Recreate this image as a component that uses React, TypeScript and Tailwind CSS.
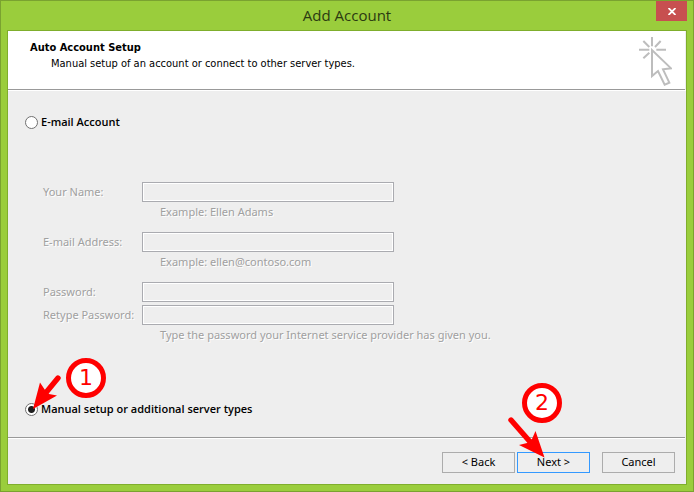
import { useState } from "react"

const fieldClass =
  "h-5 w-full min-w-0 border border-[#aaabb0] bg-[#eeeeee] px-1 shadow-[inset_0_0_0_1px_#ffffff] outline-none"
const labelClass = "leading-5 whitespace-nowrap"
const hintClass = "col-start-2 pl-[18px] leading-5"
const radioLabelClass = "font-['Open_Sans',sans-serif] font-semibold"

function ClickIcon() {
  return (
    <svg width="34" height="50" viewBox="114 106 102 150" fill="none" stroke="#bdbdbd" strokeWidth="6" aria-hidden="true">
      <path d="M156 109V137M117 147H148M169 147H198M130 121L148 139M182 121L165 139M130 173L148 156" />
      <path d="M156 148V226L174 211L194 252L208 246L189 206L213 203Z" />
    </svg>
  )
}

// Numbered circle used for the step callouts
function StepBadge({ step, className }: { step: number; className: string }) {
  return (
    <span
      className={`pointer-events-none absolute flex size-10 items-center justify-center rounded-full border-5 border-[#ff0000] bg-white font-['DejaVu_Sans',sans-serif] text-[22px] leading-none font-normal text-[#ff0000] ${className}`}
    >
      {step}
    </span>
  )
}

function Radio({ id, checked, onChange }: { id: string; checked: boolean; onChange: () => void }) {
  return (
    <input
      type="radio"
      name="setup"
      id={id}
      checked={checked}
      onChange={onChange}
      className="size-[13px] shrink-0 appearance-none rounded-full border border-[#707070] bg-white checked:bg-[radial-gradient(circle,#1f1f1f_3px,#ffffff_4px)]"
    />
  )
}

export default function App() {
  const [mode, setMode] = useState("manual")
  const disabled = mode === "manual"

  return (
    <div className="flex min-h-screen flex-col border border-[#7aa230] bg-[#9acd3c] font-['Noto_Sans','Open_Sans',sans-serif] text-[11px] text-black">
      <header className="relative flex h-[29px] items-center justify-center">
        <h1 className="font-['Open_Sans',sans-serif] text-[15px] text-[#2b3a11]">Add Account</h1>
        <button
          type="button"
          aria-label="Close"
          className="absolute top-0 right-1.5 flex h-5 w-[31px] items-center justify-center bg-[#c75050]"
        >
          <svg width="8" height="7" viewBox="0 0 8 7" stroke="#ffffff" strokeWidth="1.8" aria-hidden="true">
            <path d="M0.5 0L7.5 7M7.5 0L0.5 7" />
          </svg>
        </button>
      </header>

      <main className="mx-1.5 mb-1.5 flex grow flex-col border border-[#7fae2c] bg-[#eeeeee]">
        <section className="mr-px flex h-[59px] justify-between border-b border-[#999999] bg-white pt-[9px] pr-[13px] pl-[22px] font-['DejaVu_Sans_Condensed','DejaVu_Sans',sans-serif]">
          <div>
            <h2 className="leading-4 font-bold">Auto Account Setup</h2>
            <p className="pl-[21px] leading-[15px]">Manual setup of an account or connect to other server types.</p>
          </div>
          <div className="-mt-1">
            <ClickIcon />
          </div>
        </section>

        <form className="flex grow flex-col border-t border-white pl-[17px]" onSubmit={(e) => e.preventDefault()}>
          <div className="mt-[21px] flex h-5 items-center gap-[3px]">
            <Radio id="email-account" checked={mode === "email"} onChange={() => setMode("email")} />
            <label htmlFor="email-account" className={radioLabelClass}>E-mail Account</label>
          </div>

          <fieldset
            disabled={disabled}
            className="mt-[50px] grid grid-cols-[99px_252px_1fr] pl-[18px] text-[#a0a0a0] [text-shadow:1px_1px_0_#ffffff]"
          >
            <label htmlFor="name" className={labelClass}>Your Name:</label>
            <input id="name" type="text" className={fieldClass} />
            <p className={`${hintClass} col-span-2 mb-2.5`}>Example: Ellen Adams</p>

            <label htmlFor="email" className={labelClass}>E-mail Address:</label>
            <input id="email" type="email" className={fieldClass} />
            <p className={`${hintClass} col-span-2 mb-2.5`}>Example: ellen@contoso.com</p>

            <label htmlFor="password" className={labelClass}>Password:</label>
            <input id="password" type="password" className={fieldClass} />
            <label htmlFor="retype" className={`${labelClass} col-start-1 mt-[3px]`}>Retype Password:</label>
            <input id="retype" type="password" className={`${fieldClass} mt-[3px]`} />
            <p className={`${hintClass} col-span-2`}>Type the password your Internet service provider has given you.</p>
          </fieldset>

          <div className="relative mt-[54px] mb-[18px] flex h-5 items-center gap-[3px]">
            <Radio id="manual" checked={mode === "manual"} onChange={() => setMode("manual")} />
            <label htmlFor="manual" className={radioLabelClass}>Manual setup or additional server types</label>
            <StepBadge step={1} className="-top-[41px] left-[41px]" />
            <svg
              className="pointer-events-none absolute -top-[25px] left-1.5"
              width="32"
              height="36"
              viewBox="0 0 32 36"
              aria-hidden="true"
            >
              <path d="M27 4L13 21" stroke="#ff0000" strokeWidth="5.4" strokeLinecap="round" />
              <path d="M2 35L9 8.5L14 16L18 20L26 21.5Z" fill="#ff0000" />
            </svg>
          </div>
        </form>

        <footer className="mr-px border-t border-[#999999]">
          <div className="flex justify-end gap-[2px] border-t border-white pt-[13px] pr-2.5 pb-[11px]">
            <button type="button" className="h-[21px] w-[73px] border border-[#acacac] bg-[#eeeeee]">&lt; Back</button>
            <div className="relative">
              <button type="button" className="h-[21px] w-[73px] border border-[#3399ff] bg-[#eeeeee]">Next &gt;</button>
              <StepBadge step={2} className="-top-[69px] left-[5px]" />
              <svg
                className="pointer-events-none absolute -top-9 -left-2.5"
                width="40"
                height="44"
                viewBox="0 0 40 44"
                aria-hidden="true"
              >
                <path d="M4 4L25 28" stroke="#ff0000" strokeWidth="5.4" strokeLinecap="round" />
                <path d="M37.5 41.5L28.5 15L25 23L20 27L12 29Z" fill="#ff0000" />
              </svg>
            </div>
            <button type="button" className="ml-2.5 h-[21px] w-[73px] border border-[#acacac] bg-[#eeeeee]">Cancel</button>
          </div>
        </footer>
      </main>
    </div>
  )
}
